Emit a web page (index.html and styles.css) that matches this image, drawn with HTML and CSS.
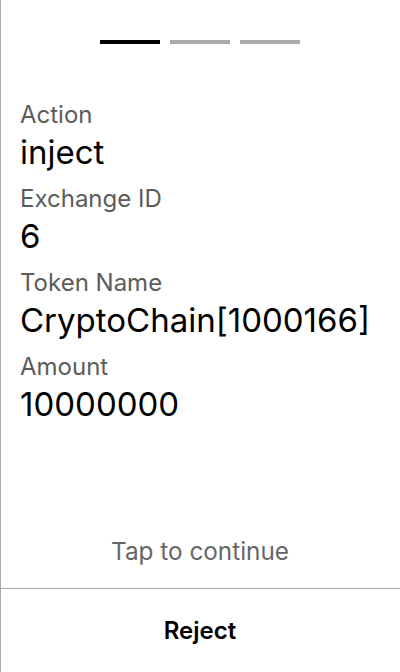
FILE: index.html
```html
<!DOCTYPE html>
<html>
<head>
<meta charset="utf-8">
<link rel="stylesheet" href="styles.css">
</head>
<body>
<div class="screen">
  <div class="progress">
    <span class="bar active"></span>
    <span class="bar"></span>
    <span class="bar"></span>
  </div>
  <div class="fields">
    <div class="field"><div class="label">Action</div><div class="value">inject</div></div>
    <div class="field"><div class="label">Exchange ID</div><div class="value">6</div></div>
    <div class="field"><div class="label">Token Name</div><div class="value">CryptoChain[1000166]</div></div>
    <div class="field"><div class="label">Amount</div><div class="value">10000000</div></div>
  </div>
  <div class="tap">Tap to continue</div>
  <div class="actions"><button class="reject">Reject</button></div>
</div>
</body>
</html>
```
FILE: styles.css
```css
html, body {
  margin: 0;
  padding: 0;
  background: #fff;
}
body {
  font-family: Inter, "Noto Sans", sans-serif;
}
.screen {
  height: 672px;
  box-sizing: border-box;
  border-left: 1px solid #aaaaaa;
  display: flex;
  flex-direction: column;
}
.progress {
  display: flex;
  justify-content: center;
  gap: 10px;
  padding-top: 40px;
  margin-left: -1px;
}
.bar {
  width: 60px;
  height: 4px;
  background: #aaaaaa;
}
.bar.active {
  background: #000;
}
.fields {
  padding: 57px 19px 0 19px;
  display: flex;
  flex-direction: column;
  gap: 13px;
}
.label {
  font-size: 24px;
  line-height: 28px;
  color: #5c5c5c;
}
.value {
  font-size: 33px;
  line-height: 40px;
  margin-top: 3px;
  color: #000;
}
.tap {
  margin-top: auto;
  text-align: center;
  font-size: 24.3px;
  line-height: 28px;
  color: #666;
  margin-bottom: 23px;
  margin-left: -1px;
}
.actions {
  border-top: 1px solid #aaaaaa;
  height: 83px;
  display: flex;
  align-items: center;
  justify-content: center;
  margin-left: -1px;
}
.reject {
  background: none;
  border: none;
  font-family: Inter, "Noto Sans", sans-serif;
  font-size: 24px;
  font-weight: 600;
  color: #000;
  padding: 0;
}
```
